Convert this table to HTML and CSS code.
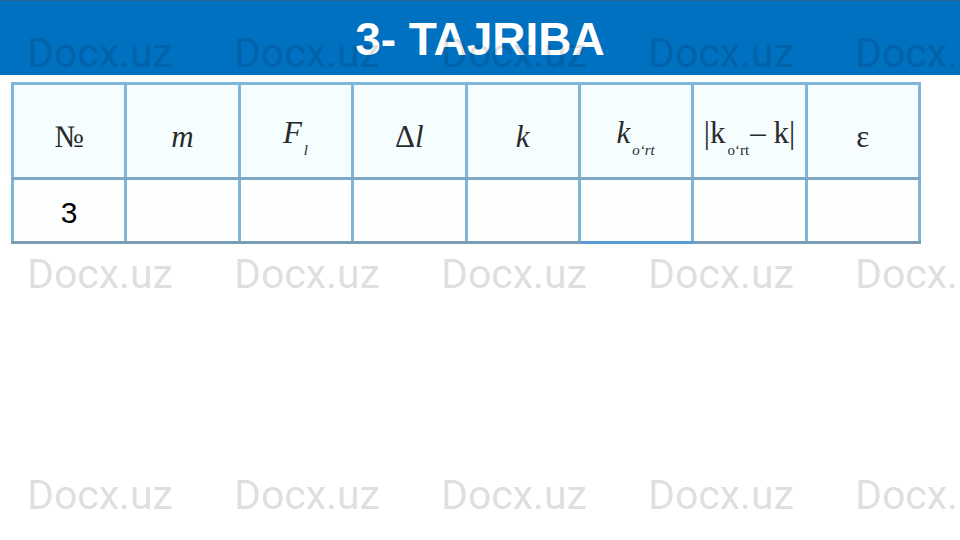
FILE: index.html
```html
<!DOCTYPE html>
<html lang="uz">
<head>
<meta charset="utf-8">
<title>3- TAJRIBA</title>
<link rel="stylesheet" href="styles.css">
</head>
<body>
<header class="banner">
  <h1 class="title">3- TAJRIBA</h1>
</header>
<main class="content">
  <table class="grid">
    <tr class="head">
      <td><span class="up">№</span></td>
      <td><span class="it">m</span></td>
      <td><span class="it">F</span><sub class="it sub">l</sub></td>
      <td><span class="up">Δ</span><span class="it">l</span></td>
      <td><span class="it">k</span></td>
      <td><span class="it">k</span><sub class="it sub">o‘rt</sub></td>
      <td><span class="up">|k</span><sub class="up sub">o‘rt</sub><span class="up">– k|</span></td>
      <td><span class="up">ε</span></td>
    </tr>
    <tr class="body">
      <td class="num">3</td>
      <td></td>
      <td></td>
      <td></td>
      <td></td>
      <td class="accent"></td>
      <td></td>
      <td></td>
    </tr>
  </table>
</main>
<div class="watermarks" aria-hidden="true">
  <span>Docx.uz</span><span>Docx.uz</span><span>Docx.uz</span><span>Docx.uz</span><span>Docx.uz</span>
  <span>Docx.uz</span><span>Docx.uz</span><span>Docx.uz</span><span>Docx.uz</span><span>Docx.uz</span>
  <span>Docx.uz</span><span>Docx.uz</span><span>Docx.uz</span><span>Docx.uz</span><span>Docx.uz</span>
</div>
</body>
</html>
```

FILE: styles.css
```css
html, body {
  margin: 0;
  padding: 0;
  background: #ffffff;
}

body {
  width: 960px;
  height: 540px;
  overflow: hidden;
  position: relative;
  font-family: "Liberation Sans", Arial, sans-serif;
}

.banner {
  height: 74px;
  background: #0070c0;
  border-top: 1px solid #2a5f94;
  text-align: center;
}

.title {
  margin: 0;
  padding-top: 2px;
  font-family: "Liberation Sans", Arial, sans-serif;
  font-weight: bold;
  font-size: 46px;
  line-height: 72px;
  color: #ffffff;
}

.content {
  padding: 7px 0 0 11px;
}

.grid {
  border-collapse: collapse;
  table-layout: fixed;
  width: 910px;
  border: 3px solid #8aa9bb;
}

.grid td {
  border: 3px solid #80b6da;
  padding: 0;
  text-align: center;
  font-family: "Liberation Serif", "Times New Roman", serif;
  font-size: 31px;
  color: #2a2a2a;
}

.head {
  height: 95px;
}

.head td {
  background: #f5fdff;
  vertical-align: middle;
  padding-top: 12px;
  border-bottom-color: #7ea8c6;
}

.body {
  height: 64px;
}

.body td {
  background: #fdffff;
  border-bottom-color: #7a9db5;
}

.grid td.accent {
  border-bottom-color: #5b9bd5;
}

.it {
  font-style: italic;
}

.up {
  font-style: normal;
}

.sub {
  font-size: 15px;
  vertical-align: -12px;
  margin: 0 1px 0 2px;
}

.grid td.num {
  font-family: "Liberation Sans", Arial, sans-serif;
  font-size: 30px;
  color: #000000;
  padding-top: 4px;
}

.watermarks {
  position: absolute;
  left: 27px;
  top: 33px;
  display: grid;
  grid-template-columns: repeat(5, 207px);
  grid-auto-rows: 221px;
  pointer-events: none;
}

.watermarks span {
  font-family: Roboto, "Noto Sans", sans-serif;
  font-size: 41px;
  line-height: 41px;
  color: rgba(0, 0, 0, 0.145);
  white-space: nowrap;
}
```
